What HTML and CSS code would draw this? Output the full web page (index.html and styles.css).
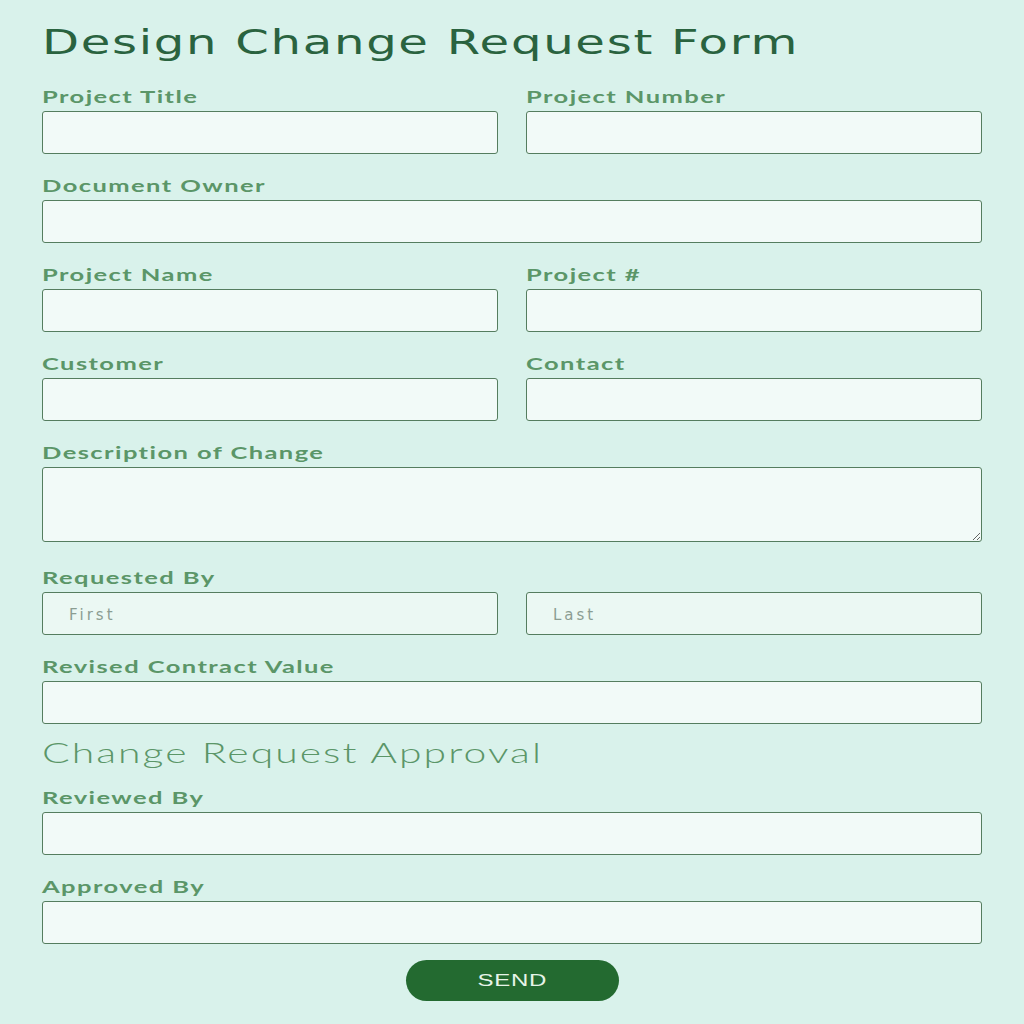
FILE: index.html
```html
<!DOCTYPE html>
<html lang="en">
<head>
<meta charset="utf-8">
<title>Design Change Request Form</title>
<link rel="stylesheet" href="styles.css">
</head>
<body>
<form class="form">
  <h1 class="title"><span class="wide">Design Change Request Form</span></h1>
  <div class="row two">
    <div class="field"><label class="label">Project Title</label><input class="input" type="text"></div>
    <div class="field"><label class="label">Project Number</label><input class="input" type="text"></div>
  </div>
  <div class="row">
    <div class="field"><label class="label">Document Owner</label><input class="input" type="text"></div>
  </div>
  <div class="row two">
    <div class="field"><label class="label">Project Name</label><input class="input" type="text"></div>
    <div class="field"><label class="label">Project #</label><input class="input" type="text"></div>
  </div>
  <div class="row two">
    <div class="field"><label class="label">Customer</label><input class="input" type="text"></div>
    <div class="field"><label class="label">Contact</label><input class="input" type="text"></div>
  </div>
  <div class="row tall">
    <div class="field"><label class="label">Description of Change</label><textarea class="input area"></textarea></div>
  </div>
  <div class="row">
    <div class="field">
      <label class="label">Requested By</label>
      <div class="pair">
        <input class="input ph" type="text" placeholder="First">
        <input class="input ph" type="text" placeholder="Last">
      </div>
    </div>
  </div>
  <div class="row last">
    <div class="field"><label class="label">Revised Contract Value</label><input class="input" type="text"></div>
  </div>
  <h2 class="subtitle"><span class="wide">Change Request Approval</span></h2>
  <div class="row">
    <div class="field"><label class="label">Reviewed By</label><input class="input" type="text"></div>
  </div>
  <div class="row last">
    <div class="field"><label class="label">Approved By</label><input class="input" type="text"></div>
  </div>
  <div class="actions"><button class="send" type="button"><span class="send-text">SEND</span></button></div>
</form>
</body>
</html>
```
FILE: styles.css
```css
html, body {
  margin: 0;
  padding: 0;
  background: #d9f2eb;
}
.form {
  width: 940px;
  margin: 0 auto;
  padding: 22px 0 0 0;
  box-sizing: border-box;
  display: flex;
  flex-direction: column;
}
.wide {
  display: inline-block;
  transform-origin: left center;
}
.title {
  margin: 0 0 24px 0;
  font-family: "DejaVu Sans", sans-serif;
  font-weight: 400;
  font-size: 34px;
  line-height: 40px;
  letter-spacing: 1.2px;
  color: #2a633f;
}
.title .wide { transform: scaleX(1.415); }
.row {
  display: flex;
  margin-bottom: 21px;
}
.row.two {
  display: grid;
  grid-template-columns: 1fr 1fr;
  column-gap: 28px;
}
.row.tall { margin-bottom: 25px; }
.row.last { margin-bottom: 12px; }
.field {
  display: flex;
  flex-direction: column;
  gap: 4px;
  flex: 1;
  min-width: 0;
}
.label {
  align-self: flex-start;
  padding-top: 1px;
  font-family: "Lato", sans-serif;
  font-weight: 700;
  font-size: 17px;
  line-height: 20px;
  letter-spacing: 0.95px;
  color: #5b9668;
  transform: scaleX(1.5);
  transform-origin: left center;
}
.input {
  display: block;
  width: 100%;
  height: 43px;
  box-sizing: border-box;
  margin: 0;
  border: 1px solid #557d5f;
  border-radius: 3px;
  background: #f2faf8;
  padding: 0 26px;
  font-family: "Lato", sans-serif;
  font-size: 15px;
  color: #333;
}
.area {
  height: 75px;
  resize: vertical;
}
.ph { background: #ebf8f3; }
.ph::placeholder {
  font-family: "DejaVu Sans", sans-serif;
  font-size: 15px;
  color: #8b9d92;
  letter-spacing: 3px;
}
.pair {
  display: grid;
  grid-template-columns: 1fr 1fr;
  column-gap: 28px;
}
.subtitle {
  margin: 0 0 19px 0;
  font-family: "Lato", sans-serif;
  font-weight: 300;
  font-size: 28px;
  line-height: 32px;
  letter-spacing: 1.4px;
  color: #5b9668;
}
.subtitle .wide { transform: scaleX(1.46); }
.actions {
  display: flex;
  justify-content: center;
  margin-top: 4px;
}
.send {
  width: 213px;
  height: 41px;
  border: none;
  border-radius: 21px;
  background: #236a30;
  color: #e6f4e8;
  font-family: "Liberation Sans", sans-serif;
  font-size: 16px;
  letter-spacing: 0.5px;
  cursor: pointer;
}
.send-text {
  display: inline-block;
  transform: scaleX(1.5);
}
```
